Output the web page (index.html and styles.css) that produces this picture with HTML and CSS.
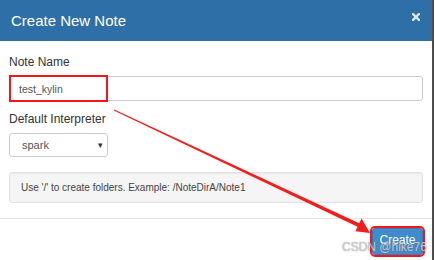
FILE: index.html
```html
<!DOCTYPE html>
<html lang="en">
<head>
    <meta charset="UTF-8">
    <title>Create New Note</title>
    <link rel="stylesheet" href="styles.css">
</head>
<body>
    <div class="modal">
        <div class="modal-header">
            <span class="modal-title">Create New Note</span>
            <svg class="close" width="8" height="8" viewBox="0 0 8 8">
                <path d="M1 1L7 7M7 1L1 7" stroke="#dfe7ef" stroke-width="2.4" stroke-linecap="square"/>
            </svg>
        </div>
        <div class="modal-body">
            <label class="label">Note Name</label>
            <div class="field">
                <input type="text" class="input" value="test_kylin" readonly>
                <div class="mark"></div>
            </div>
            <label class="label">Default Interpreter</label>
            <div class="select">
                <span>spark</span>
                <span class="caret">&#9662;</span>
            </div>
            <div class="well">Use '/' to create folders. Example: /NoteDirA/Note1</div>
        </div>
        <div class="modal-footer">
            <button class="btn">Create</button>
        </div>
    </div>

    <svg class="arrow" width="435" height="260" viewBox="0 0 435 260">
        <polygon fill="#f21d1d" points="113.8,110.4 114.2,109.6 359.2,223.3 361.6,218.6 370,233 355.4,231.2 357.6,226.8"/>
    </svg>
    <div class="watermark">CSDN @hike76</div>
</body>
</html>
```

FILE: styles.css
```css
body {
    margin: 0;
    font-family: "Liberation Sans", Arial, sans-serif;
    background-color: #fff;
    color: #333;
    width: 435px;
    height: 260px;
    overflow: hidden;
    position: relative;
}

.modal {
    width: 432px;
    height: 260px;
    border-right: 2px solid #4d4d4d;
    background-color: #fff;
}

.modal-header {
    height: 41px;
    background-color: #2f6fa7;
    display: flex;
    align-items: center;
    justify-content: space-between;
    padding: 0 12px 0 11px;
}

.modal-title {
    font-size: 15px;
    color: #fff;
    margin-top: -1px;
}

.close {
    margin-top: -7px;
}

.modal-body {
    padding: 14px 9px 15px;
}

.label {
    display: block;
    font-size: 12px;
    margin-bottom: 7px;
}

.field {
    position: relative;
    margin-bottom: 11px;
}

.input {
    display: block;
    box-sizing: border-box;
    width: 414px;
    height: 25px;
    border: 1px solid #ccc;
    border-radius: 3px;
    padding: 0 9px;
    font-family: inherit;
    font-size: 10.5px;
    color: #555;
    outline: none;
}

.mark {
    position: absolute;
    left: 0;
    top: -1px;
    width: 95px;
    height: 23px;
    border: 2px solid #f4161b;
}

.select {
    box-sizing: border-box;
    width: 99px;
    height: 24px;
    border: 1px solid #ccc;
    border-radius: 3px;
    display: flex;
    align-items: center;
    justify-content: space-between;
    padding: 0 4px 0 12px;
    font-size: 11px;
    color: #555;
    margin-bottom: 15px;
}

.caret {
    font-size: 9px;
    color: #333;
}

.well {
    box-sizing: border-box;
    width: 414px;
    height: 31px;
    background-color: #f5f5f5;
    border: 1px solid #e3e3e3;
    border-radius: 3px;
    box-shadow: inset 0 1px 1px rgba(0, 0, 0, 0.05);
    padding: 0 11px;
    display: flex;
    align-items: center;
    font-size: 10px;
    color: #444;
}

.modal-footer {
    border-top: 1px solid #e5e5e5;
    display: flex;
    justify-content: flex-end;
    padding: 9px 9px 0;
}

.btn {
    width: 51px;
    height: 27px;
    background-color: #428bca;
    border: 1px solid #357ebd;
    border-radius: 3px;
    color: #fff;
    font-family: inherit;
    font-size: 12px;
    padding: 0 0 4px;
    outline: 2px solid #f4161b;
    outline-offset: 0;
}

.arrow {
    position: absolute;
    left: 0;
    top: 0;
}

.watermark {
    position: absolute;
    left: 342px;
    top: 240px;
    font-size: 12px;
    color: rgba(225, 225, 225, 0.8);
    text-shadow: 0 0 1px rgba(90, 90, 90, 0.8);
}
```
